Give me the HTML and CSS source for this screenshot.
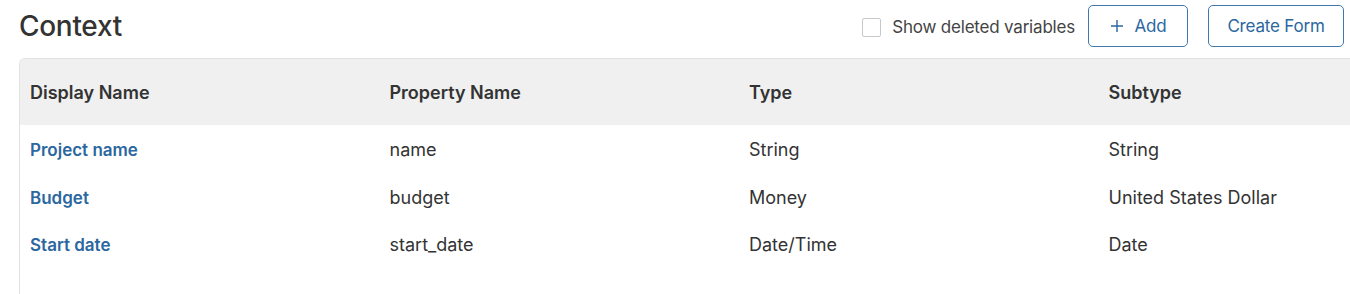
FILE: index.html
```html
<!DOCTYPE html>
<html>
<head>
<meta charset="utf-8">
<link rel="stylesheet" href="styles.css">
</head>
<body>
<div class="page">
  <div class="topbar">
    <h1 class="title">Context</h1>
    <div class="actions">
      <label class="check"><span class="box"></span><span class="check-label">Show deleted variables</span></label>
      <button class="btn btn-add"><svg class="plus" width="14" height="14" viewBox="0 0 14 14"><path d="M7 1v12M1 7h12" stroke="currentColor" stroke-width="1.4" fill="none"/></svg><span>Add</span></button>
      <button class="btn btn-form">Create Form</button>
    </div>
  </div>
  <div class="table">
    <div class="row head">
      <div class="cell">Display Name</div>
      <div class="cell">Property Name</div>
      <div class="cell">Type</div>
      <div class="cell">Subtype</div>
    </div>
    <div class="row">
      <div class="cell link">Project name</div>
      <div class="cell">name</div>
      <div class="cell">String</div>
      <div class="cell">String</div>
    </div>
    <div class="row">
      <div class="cell link">Budget</div>
      <div class="cell">budget</div>
      <div class="cell">Money</div>
      <div class="cell">United States Dollar</div>
    </div>
    <div class="row">
      <div class="cell link">Start date</div>
      <div class="cell">start_date</div>
      <div class="cell">Date/Time</div>
      <div class="cell">Date</div>
    </div>
  </div>
</div>
</body>
</html>
```
FILE: styles.css
```css
html, body {
  margin: 0;
  padding: 0;
  background: #fff;
  overflow: hidden;
}
body {
  font-family: Inter, "Noto Sans", sans-serif;
  color: #333;
  width: 1350px;
  height: 294px;
}
.page {
  width: 1350px;
  height: 294px;
  overflow: hidden;
}
.topbar {
  display: flex;
  align-items: center;
  justify-content: space-between;
  padding: 5px 6px 0 19px;
  height: 42px;
}
.title {
  margin: 0;
  font-size: 28px;
  font-weight: 500;
  color: #333;
  letter-spacing: -0.3px;
}
.actions {
  display: flex;
  align-items: center;
}
.check {
  display: flex;
  align-items: center;
  gap: 11px;
  margin-right: 13px;
  padding-top: 2px;
}
.box {
  width: 17px;
  height: 17px;
  border: 1px solid #c8c8c8;
  border-radius: 2px;
  background: #fff;
}
.check-label {
  font-size: 17px;
  color: #444;
  letter-spacing: -0.2px;
}
.btn {
  height: 42px;
  border: 1px solid #3f78ac;
  border-radius: 5px;
  background: #fff;
  color: #2b67a0;
  font-family: Inter, "Noto Sans", sans-serif;
  font-size: 17px;
  display: flex;
  align-items: center;
  justify-content: center;
  padding: 0;
  letter-spacing: -0.2px;
}
.btn-add {
  width: 100px;
  gap: 11px;
  margin-right: 20px;
}
.plus {
  color: #2b67a0;
}
.btn-form {
  width: 136px;
}
.table {
  margin: 11px 0 0 19px;
  width: 1440px;
  height: 300px;
  border: 1px solid #e2e2e2;
  border-right: none;
  border-bottom: none;
  border-top-left-radius: 6px;
  overflow: hidden;
}
.row {
  display: grid;
  grid-template-columns: repeat(4, 359.5px);
  height: 47px;
  align-items: center;
}
.row.head {
  height: 66px;
  background: #f0f0f0;
}
.row:nth-child(2) {
  height: 49px;
}
.cell {
  padding-left: 10px;
  font-size: 18px;
  color: #333;
}
.head .cell {
  font-weight: 600;
  color: #333;
}
.cell.link {
  font-size: 17px;
  color: #2b67a0;
  font-weight: 600;
}
```
